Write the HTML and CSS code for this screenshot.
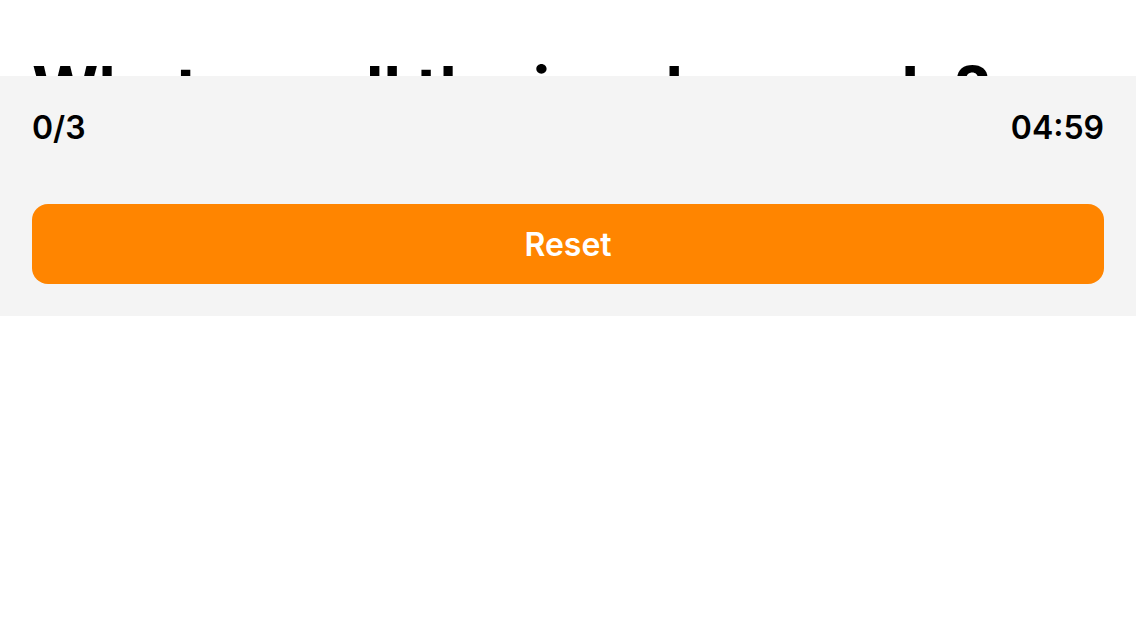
FILE: index.html
```html
<!DOCTYPE html>
<html lang="en">
<head>
<meta charset="utf-8">
<title>Quiz</title>
<link rel="stylesheet" href="styles.css">
</head>
<body>
<main class="page">
  <h1 class="question">What are all the insular words?</h1>
  <section class="panel">
    <div class="status">
      <span class="score">0/3</span>
      <span class="timer">04:59</span>
    </div>
    <button class="reset" type="button">Reset</button>
  </section>
</main>
</body>
</html>
```

FILE: styles.css
```css
* { box-sizing: border-box; }
html, body {
  margin: 0;
  padding: 0;
  background: #ffffff;
  font-family: "Inter", "Liberation Sans", sans-serif;
  color: #000000;
}
.page {
  position: relative;
  width: 1136px;
  height: 640px;
  overflow: hidden;
}
.question {
  margin: 0;
  padding: 52px 32px 0;
  font-size: 64px;
  line-height: 75px;
  font-weight: 700;
  white-space: nowrap;
}
.panel {
  position: absolute;
  left: 0;
  top: 76px;
  width: 100%;
  background: #f4f4f4;
  padding: 32px;
  display: flex;
  flex-direction: column;
  gap: 56px;
}
.status {
  display: flex;
  justify-content: space-between;
  align-items: center;
  height: 40px;
  font-size: 32px;
  line-height: 40px;
  font-weight: 600;
}
.reset {
  height: 80px;
  border: none;
  border-radius: 16px;
  background: #ff8500;
  color: #ffffff;
  font-family: inherit;
  font-size: 32px;
  font-weight: 600;
  cursor: pointer;
}
```
